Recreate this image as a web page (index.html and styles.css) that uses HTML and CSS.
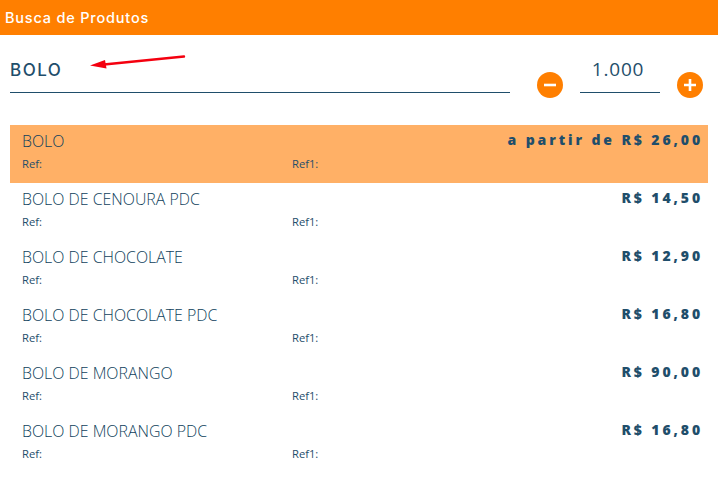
FILE: index.html
```html
<!DOCTYPE html>
<html lang="pt-BR">

<head>
  <meta charset="UTF-8">
  <meta name="viewport" content="width=device-width, initial-scale=1">
  <title>Busca de Produtos</title>
  <link rel="stylesheet" href="styles.css">
</head>

<body>
  <header class="topbar">Busca de Produtos</header>

  <section class="search">
    <div class="search-field">BOLO</div>
    <button class="round-btn" aria-label="Diminuir">
      <svg width="26" height="26" viewBox="0 0 26 26"><path d="M7 13h12" stroke="#fff" stroke-width="2.6"/></svg>
    </button>
    <div class="qty">1.000</div>
    <button class="round-btn" aria-label="Aumentar">
      <svg width="26" height="26" viewBox="0 0 26 26"><path d="M7 13h12M13 7v12" stroke="#fff" stroke-width="2.6"/></svg>
    </button>
    <svg class="arrow" width="100" height="16" viewBox="0 0 100 16">
      <path d="M94 1.5L14 9.5" stroke="#f4000f" stroke-width="2.4" stroke-linecap="round"/>
      <path d="M0 10.5L15 5L16.5 13.5Z" fill="#f4000f"/>
    </svg>
  </section>

  <ul class="products">
    <li class="product selected">
      <div class="product-top"><span class="name">BOLO</span><span class="price">a partir de R$ 26,00</span></div>
      <div class="refs"><span class="ref">Ref:</span><span>Ref1:</span></div>
    </li>
    <li class="product">
      <div class="product-top"><span class="name">BOLO DE CENOURA PDC</span><span class="price">R$ 14,50</span></div>
      <div class="refs"><span class="ref">Ref:</span><span>Ref1:</span></div>
    </li>
    <li class="product">
      <div class="product-top"><span class="name">BOLO DE CHOCOLATE</span><span class="price">R$ 12,90</span></div>
      <div class="refs"><span class="ref">Ref:</span><span>Ref1:</span></div>
    </li>
    <li class="product">
      <div class="product-top"><span class="name">BOLO DE CHOCOLATE PDC</span><span class="price">R$ 16,80</span></div>
      <div class="refs"><span class="ref">Ref:</span><span>Ref1:</span></div>
    </li>
    <li class="product">
      <div class="product-top"><span class="name">BOLO DE MORANGO</span><span class="price">R$ 90,00</span></div>
      <div class="refs"><span class="ref">Ref:</span><span>Ref1:</span></div>
    </li>
    <li class="product">
      <div class="product-top"><span class="name">BOLO DE MORANGO PDC</span><span class="price">R$ 16,80</span></div>
      <div class="refs"><span class="ref">Ref:</span><span>Ref1:</span></div>
    </li>
  </ul>
</body>
</html>
```

FILE: styles.css
```css
body {
  margin: 0;
  background-color: #fff;
  color: #1f4e6b;
  font-family: "Open Sans", sans-serif;
  overflow: hidden;
}

.topbar {
  height: 35px;
  line-height: 35px;
  padding-left: 5px;
  background-color: #ff7f00;
  color: #fff;
  font-family: Inter, sans-serif;
  font-size: 14.5px;
  font-weight: 500;
  letter-spacing: 0.8px;
}

.search {
  position: relative;
  display: flex;
  align-items: flex-end;
  height: 58px;
  padding: 0 15px 0 10px;
}

.search-field {
  width: 500px;
  height: 44px;
  line-height: 42px;
  box-sizing: border-box;
  border-bottom: 1px solid #1f4e6b;
  font-family: Inter, sans-serif;
  font-size: 17px;
  font-weight: 500;
  letter-spacing: 1.5px;
}

.round-btn {
  width: 26px;
  height: 26px;
  padding: 0;
  margin: 0 0 -5px 27px;
  border: none;
  border-radius: 50%;
  background-color: #ff7f00;
  cursor: pointer;
}

.round-btn svg {
  display: block;
}

.qty {
  width: 80px;
  height: 44px;
  line-height: 40px;
  margin-left: 17px;
  padding-right: 4px;
  box-sizing: border-box;
  border-bottom: 1px solid #1f4e6b;
  text-align: center;
  font-size: 19px;
  letter-spacing: 0.8px;
}

.qty + .round-btn {
  margin-left: 17px;
}

.arrow {
  position: absolute;
  left: 90px;
  top: 20px;
}

.products {
  list-style: none;
  margin: 32px 10px 0;
  padding: 0;
}

.product {
  height: 58px;
  padding: 0 5px 0 12px;
  box-sizing: border-box;
}

.selected {
  background-color: #ffb066;
}

.product-top {
  display: flex;
  justify-content: space-between;
  height: 33px;
  line-height: 33px;
}

.name {
  font-size: 15.9px;
  font-weight: 300;
  color: #0f3f5c;
}

.price {
  font-size: 14px;
  font-weight: 800;
  letter-spacing: 2.9px;
  line-height: 30px;
}

.refs {
  display: flex;
  font-size: 11.2px;
  line-height: 12px;
}

.ref {
  width: 270px;
}
```
